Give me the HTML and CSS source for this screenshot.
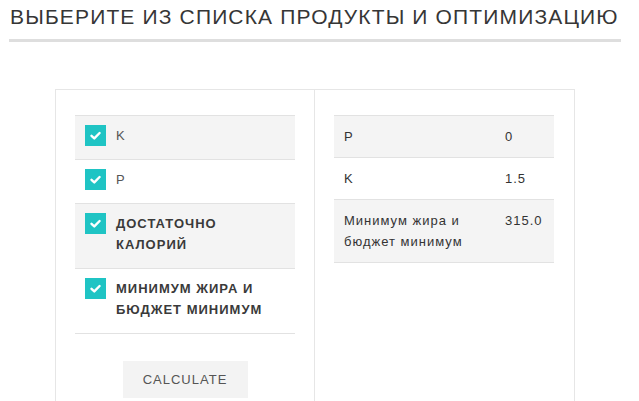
FILE: index.html
```html
<!DOCTYPE html>
<html lang="ru">
<head>
<meta charset="utf-8">
<title>Оптимизация</title>
<link rel="stylesheet" href="styles.css">
</head>
<body>
<div class="page">
  <header class="header">
    <h1 class="title">ВЫБЕРИТЕ ИЗ СПИСКА ПРОДУКТЫ И ОПТИМИЗАЦИЮ</h1>
  </header>
  <main class="panel">
    <section class="col col-left">
      <ul class="checklist">
        <li class="check-item shaded">
          <span class="box"><svg viewBox="0 0 21 21" width="21" height="21"><polyline points="6.5,10.8 9.3,13.4 14.6,8" fill="none" stroke="#fff" stroke-width="2.4" stroke-linecap="round" stroke-linejoin="round"/></svg></span>
          <span class="label light">K</span>
        </li>
        <li class="check-item">
          <span class="box"><svg viewBox="0 0 21 21" width="21" height="21"><polyline points="6.5,10.8 9.3,13.4 14.6,8" fill="none" stroke="#fff" stroke-width="2.4" stroke-linecap="round" stroke-linejoin="round"/></svg></span>
          <span class="label light">P</span>
        </li>
        <li class="check-item shaded">
          <span class="box"><svg viewBox="0 0 21 21" width="21" height="21"><polyline points="6.5,10.8 9.3,13.4 14.6,8" fill="none" stroke="#fff" stroke-width="2.4" stroke-linecap="round" stroke-linejoin="round"/></svg></span>
          <span class="label">ДОСТАТОЧНО<br>КАЛОРИЙ</span>
        </li>
        <li class="check-item">
          <span class="box"><svg viewBox="0 0 21 21" width="21" height="21"><polyline points="6.5,10.8 9.3,13.4 14.6,8" fill="none" stroke="#fff" stroke-width="2.4" stroke-linecap="round" stroke-linejoin="round"/></svg></span>
          <span class="label">МИНИМУМ ЖИРА И<br>БЮДЖЕТ МИНИМУМ</span>
        </li>
      </ul>
      <div class="actions">
        <button class="btn" type="button">CALCULATE</button>
      </div>
    </section>
    <section class="col col-right">
      <table class="results">
        <tr class="shaded"><td class="name">P</td><td class="value">0</td></tr>
        <tr><td class="name">K</td><td class="value">1.5</td></tr>
        <tr class="shaded"><td class="name">Минимум жира и бюджет минимум</td><td class="value">315.0</td></tr>
      </table>
    </section>
  </main>
</div>
</body>
</html>
```
FILE: styles.css
```css
html, body {
  margin: 0;
  padding: 0;
  background: #fff;
}
body {
  font-family: "Liberation Sans", Arial, sans-serif;
  color: #333;
}
.page {
  padding: 5px 0 0 9px;
  width: 612px;
}
.header {
  border-bottom: 3px solid #dedede;
  padding-bottom: 11px;
}
.title {
  margin: 0;
  padding-left: 1px;
  font-size: 21px;
  line-height: 23px;
  font-weight: normal;
  letter-spacing: 1.15px;
  color: #363636;
  white-space: nowrap;
}
.panel {
  margin: 47px 0 0 46px;
  width: 518px;
  border: 1px solid #e6e6e6;
  display: grid;
  grid-template-columns: 259px 259px;
  height: 320px;
}
.col {
  padding-top: 25px;
}
.col-left {
  border-right: 1px solid #e6e6e6;
  padding-left: 19px;
  padding-right: 19px;
}
.col-right {
  padding-left: 19px;
  padding-right: 19px;
}
.checklist {
  list-style: none;
  margin: 0;
  padding: 0;
  border-top: 1px solid #e2e2e2;
}
.check-item {
  display: flex;
  align-items: flex-start;
  gap: 10px;
  padding: 9px 10px 13px 10px;
  border-bottom: 1px solid #e2e2e2;
}
.shaded {
  background: #f4f4f4;
}
.box {
  flex: none;
  width: 21px;
  height: 21px;
  background: #1fc4c4;
  display: block;
}
.box svg {
  display: block;
}
.label {
  font-size: 13px;
  line-height: 21px;
  font-weight: bold;
  letter-spacing: 1px;
  color: #3a3a3a;
}
.label.light {
  font-weight: normal;
  color: #555;
}
.actions {
  display: flex;
  justify-content: center;
  padding-top: 27px;
}
.btn {
  border: none;
  background: #f3f3f3;
  width: 125px;
  height: 37px;
  font-family: "Liberation Sans", Arial, sans-serif;
  font-size: 13px;
  letter-spacing: 1px;
  color: #555;
  padding: 0;
}
.results {
  width: 220px;
  border-collapse: collapse;
  border-top: 1px solid #e2e2e2;
}
.results td {
  padding: 10px 10px;
  font-size: 13px;
  line-height: 21px;
  letter-spacing: 1px;
  color: #333;
  vertical-align: top;
  border-bottom: 1px solid #e2e2e2;
}
.results .name {
  width: 141px;
}
.results .value {
  width: 39px;
}
```
